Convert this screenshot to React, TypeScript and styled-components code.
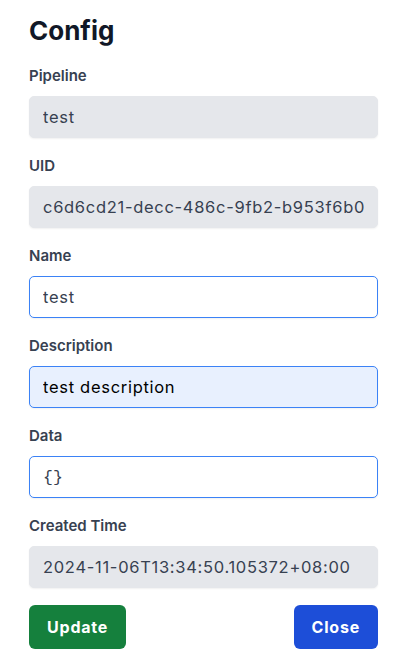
import React from "react";
import styled, { createGlobalStyle } from "styled-components";

const Global = createGlobalStyle`
  html, body { margin: 0; padding: 0; background: #ffffff; }
  body { font-family: Inter, "Noto Sans", sans-serif; -webkit-font-smoothing: antialiased; }
  * { box-sizing: border-box; }
`;

const Panel = styled.div`
  width: 410px;
  padding: 14px 32px 0 29px;
  display: flex;
  flex-direction: column;
`;

const Title = styled.h2`
  margin: 0 0 18px 0;
  font-size: 26px;
  line-height: 34px;
  font-weight: 700;
  color: #111827;
`;

const Field = styled.div`
  display: flex;
  flex-direction: column;
  gap: 10px;
  margin-bottom: 18px;
`;

const Label = styled.label`
  font-size: 15px;
  line-height: 20px;
  font-weight: 600;
  color: #374151;
`;

type Variant = "readonly" | "focus" | "autofill";

const Input = styled.input<{ $variant: Variant; $mono?: boolean }>`
  width: 100%;
  height: 42px;
  padding: 0 13px;
  border-radius: 5px;
  font-size: 16.5px;
  letter-spacing: ${(p) => (p.$mono ? "0" : "0.7px")};
  font-family: ${(p) => (p.$mono ? `"Liberation Mono", monospace` : `Inter, sans-serif`)};
  color: ${(p) => (p.$variant === "autofill" ? "#000000" : "#374151")};
  outline: none;
  box-shadow: 0 1px 2px rgba(0, 0, 0, 0.06);
  border: 1px solid
    ${(p) => (p.$variant === "readonly" ? "#e5e7eb" : "#3b82f6")};
  background: ${(p) =>
    p.$variant === "readonly" ? "#e5e7eb" : p.$variant === "autofill" ? "#e8f0fe" : "#ffffff"};
`;

const Actions = styled.div`
  display: flex;
  justify-content: space-between;
  margin-top: -1px;
`;

const Button = styled.button<{ $tone: "green" | "blue" }>`
  height: 44px;
  padding: 0 18px;
  border: none;
  border-radius: 6px;
  font-family: Inter, sans-serif;
  font-size: 16px;
  letter-spacing: 0.8px;
  font-weight: 700;
  color: #ffffff;
  background: ${(p) => (p.$tone === "green" ? "#15803d" : "#1d4ed8")};
`;

const fields: { label: string; value: string; variant: Variant; mono?: boolean }[] = [
  { label: "Pipeline", value: "test", variant: "readonly" },
  { label: "UID", value: "c6d6cd21-decc-486c-9fb2-b953f6b0c1a2", variant: "readonly" },
  { label: "Name", value: "test", variant: "focus" },
  { label: "Description", value: "test description", variant: "autofill" },
  { label: "Data", value: "{}", variant: "focus", mono: true },
  { label: "Created Time", value: "2024-11-06T13:34:50.105372+08:00", variant: "readonly" },
];

export default function App() {
  return (
    <>
      <Global />
      <Panel>
        <Title>Config</Title>
        {fields.map((f) => (
          <Field key={f.label}>
            <Label>{f.label}</Label>
            <Input
              $variant={f.variant}
              $mono={f.mono}
              value={f.value}
              readOnly
            />
          </Field>
        ))}
        <Actions>
          <Button $tone="green">Update</Button>
          <Button $tone="blue">Close</Button>
        </Actions>
      </Panel>
    </>
  );
}
